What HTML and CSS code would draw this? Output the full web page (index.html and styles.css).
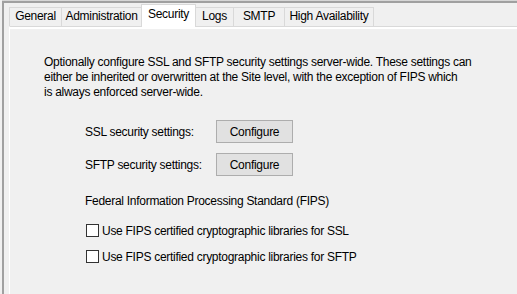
FILE: index.html
```html
<!DOCTYPE html>
<html>
<head>
<meta charset="utf-8">
<link rel="stylesheet" href="styles.css">
</head>
<body>
<div class="frame">
  <div class="tabs">
    <div class="tab t-general">General</div>
    <div class="tab t-admin">Administration</div>
    <div class="tab active t-security">Security</div>
    <div class="tab t-logs">Logs</div>
    <div class="tab t-smtp">SMTP</div>
    <div class="tab t-ha">High Availability</div>
  </div>
  <div class="panel">
    <p class="desc">Optionally configure SSL and SFTP security settings server-wide. These settings can<br>either be inherited or overwritten at the Site level, with the exception of FIPS which<br>is always enforced server-wide.</p>
    <div class="settings">
      <div class="row">
        <span class="label">SSL security settings:</span>
        <button class="btn">Configure</button>
      </div>
      <div class="row">
        <span class="label">SFTP security settings:</span>
        <button class="btn">Configure</button>
      </div>
      <div class="heading">Federal Information Processing Standard (FIPS)</div>
      <label class="check"><span class="box"></span><span>Use FIPS certified cryptographic libraries for SSL</span></label>
      <label class="check"><span class="box"></span><span>Use FIPS certified cryptographic libraries for SFTP</span></label>
    </div>
  </div>
</div>
</body>
</html>
```
FILE: styles.css
```css
html, body {
  margin: 0;
  padding: 0;
  background: #f0f0f0;
  width: 517px;
  height: 294px;
  overflow: hidden;
}
body {
  font-family: "Liberation Sans", Arial, sans-serif;
  font-size: 12px;
  letter-spacing: -0.28px;
  color: #000;
}
.frame {
  margin: 1px 0 0 2px;
  border-top: 2px solid #a0a0a0;
  border-left: 2px solid #a0a0a0;
  box-shadow: 0 -1px 0 #d6d6d6;
  height: 300px;
  padding-left: 5px;
}
.tabs {
  display: flex;
  align-items: flex-end;
  height: 23px;
}
.tab {
  box-sizing: border-box;
  height: 19px;
  line-height: 17px;
  border: 1px solid #d9d9d9;
  border-bottom: none;
  border-right: none;
  background: #f0f0f0;
  padding: 0 3px;
  white-space: nowrap;
  text-align: center;
}
.t-general { width: 52px; }
.t-admin { width: 80px; }
.t-security { width: 55px; }
.t-logs { width: 37px; border-left: none; }
.t-smtp { width: 51px; }
.t-ha { width: 90px; border-right: 1px solid #d9d9d9; }
.tab.active {
  height: 23px;
  line-height: 19px;
  background: #fff;
  border-right: 1px solid #d9d9d9;
  position: relative;
  z-index: 1;
  margin-bottom: -1px;
}
.panel {
  box-sizing: border-box;
  border-top: 1px solid #d9d9d9;
  border-left: 1px solid #fff;
  box-shadow: inset 0 2px 0 #fff;
  height: 280px;
  padding: 28px 0 0 34px;
}
.desc {
  margin: 0;
  white-space: nowrap;
  line-height: 15px;
}
.settings {
  padding-left: 41px;
  display: flex;
  flex-direction: column;
  align-items: flex-start;
}
.row {
  display: flex;
  align-items: center;
  height: 23px;
  margin-top: 20px;
}
.row + .row { margin-top: 10px; }
.label {
  width: 131px;
}
.btn {
  box-sizing: border-box;
  width: 77px;
  height: 23px;
  border: 1px solid #adadad;
  background: #e1e1e1;
  font: inherit;
  letter-spacing: inherit;
  color: #000;
  padding: 0;
}
.heading {
  margin-top: 18px;
  line-height: 15px;
}
.check {
  display: flex;
  align-items: center;
  height: 13px;
  margin-top: 15px;
  margin-left: 1px;
}
.check + .check { margin-top: 13px; }
.box {
  box-sizing: border-box;
  width: 13px;
  height: 13px;
  border: 1px solid #333;
  background: #fff;
  margin-right: 3px;
}
```
